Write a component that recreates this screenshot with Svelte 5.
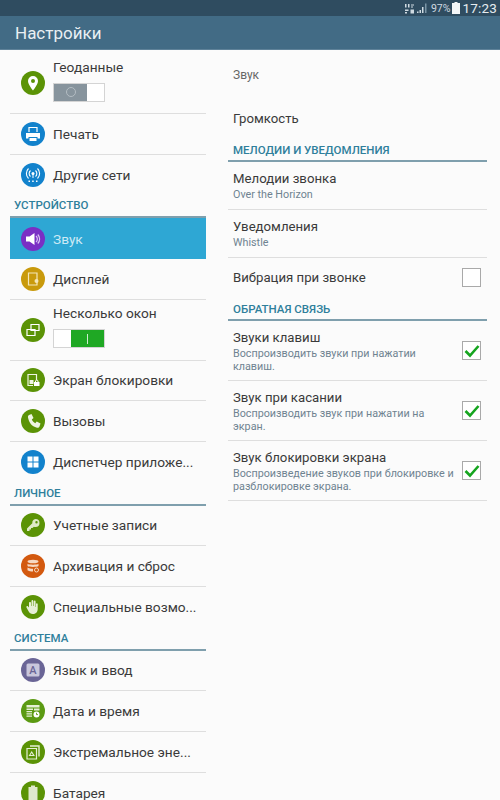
<script lang="ts">
  const GREEN = '#5b9306';
  const BLUE = '#1282cc';

  const left = [
    { label: 'Геоданные', icon: 'pin', color: GREEN, toggle: 'off' },
    { label: 'Печать', icon: 'print', color: BLUE },
    { label: 'Другие сети', icon: 'net', color: BLUE, last: true },
    { header: 'Устройство' },
    { label: 'Звук', icon: 'sound', color: '#7a2fc4', active: true },
    { label: 'Дисплей', icon: 'display', color: '#c99a0c' },
    { label: 'Несколько окон', icon: 'windows', color: GREEN, toggle: 'on' },
    { label: 'Экран блокировки', icon: 'lock', color: GREEN },
    { label: 'Вызовы', icon: 'phone', color: GREEN },
    { label: 'Диспетчер приложе...', icon: 'apps', color: BLUE, last: true },
    { header: 'Личное' },
    { label: 'Учетные записи', icon: 'key', color: GREEN },
    { label: 'Архивация и сброс', icon: 'backup', color: '#d3590f' },
    { label: 'Специальные возмо...', icon: 'hand', color: GREEN, last: true },
    { header: 'Система' },
    { label: 'Язык и ввод', icon: 'lang', color: '#6a6596' },
    { label: 'Дата и время', icon: 'date', color: '#5b9a12' },
    { label: 'Экстремальное эне...', icon: 'eco', color: GREEN },
    { label: 'Батарея', icon: 'battery', color: GREEN, last: true }
  ];

  const feedback = [
    { title: 'Звуки клавиш', sub: 'Воспроизводить звуки при нажатии клавиш.' },
    { title: 'Звук при касании', sub: 'Воспроизводить звук при нажатии на экран.' },
    { title: 'Звук блокировки экрана', sub: 'Воспроизведение звуков при блокировке и разблокировке экрана.' }
  ];
</script>

{#snippet glyph(name)}
  <svg viewBox="0 0 24 24" width="24" height="24">
    {#if name === 'pin'}
      <path fill="#fff" fill-rule="evenodd" d="M12 5a5 5 0 0 0-5 5c0 3.500 5 9.500 5 9.500s5-6 5-9.500a5 5 0 0 0-5-5zm0 3a2 2 0 1 1 0 4 2 2 0 0 1 0-4z" />
    {:else if name === 'print'}
      <path fill="none" stroke="#fff" stroke-width="1.200" d="M8 10V5.500h8V10" />
      <path fill="#fff" d="M5 11h14v5.500h-2.500V15h-9v1.500H5zM8.500 16h7v3h-7z" />
    {:else if name === 'net'}
      <g fill="none" stroke="#fff" stroke-width="1.100">
        <path d="M9.500 7.500a4 4 0 0 0 0 6M14.500 7.500a4 4 0 0 1 0 6M7.500 5.500a7 7 0 0 0 0 10M16.500 5.500a7 7 0 0 1 0 10" />
      </g>
      <circle cx="12" cy="10.500" r="1.500" fill="#fff" />
      <path fill="#fff" d="M11.500 11h1v4h-1zM7.500 17.500h1.500v1.500H7.500zM11.200 17.500h1.500v1.500h-1.500zM15 17.500h1.500v1.500H15z" />
    {:else if name === 'sound'}
      <path fill="#fff" d="M5 9.500h3.500L13.500 6v12l-5-3.500H5z" />
      <path fill="none" stroke="#d9c4f2" stroke-width="1.200" d="M15 9a4 4 0 0 1 0 6M16.800 7.500a6.500 6.500 0 0 1 0 9" />
    {:else if name === 'display'}
      <path fill="none" stroke="#f4e6b8" stroke-width="1.200" d="M7.500 6h8.500v12H7.500z" />
      <circle cx="15.500" cy="14" r="2" fill="#f4e6b8" />
    {:else if name === 'windows'}
      <path fill="none" stroke="#fff" stroke-width="1.200" d="M10 6.500h8v6h-8zM6 11.500h8v6H6z" />
    {:else if name === 'lock'}
      <path fill="none" stroke="#eef5e2" stroke-width="1.200" d="M7 12V6.500h8.500V12M7 12v5.500h5" />
      <path fill="#eef5e2" d="M8.500 12h4v4h-4z" />
      <path fill="#fff" d="M13 14h5.500v4H13z" />
      <path fill="none" stroke="#fff" d="M14.500 14v-1a1.300 1.300 0 0 1 2.500 0v1" />
    {:else if name === 'phone'}
      <path fill="#eef5e2" d="M8 6l2.500-1 2 4-1.700 1.500c.8 1.800 2 3 3.500 3.800l1.400-1.800 3.800 2-1 3c-.4 1-1.500 1.500-2.500 1.200C10.500 17.500 8 13.500 7 8.500 6.800 7.500 7.200 6.400 8 6z" />
    {:else if name === 'apps'}
      <path fill="#fff" d="M6.500 6.500h5v5h-5zM12.500 6.500h5v5h-5zM6.500 12.500h5v5h-5zM12.500 12.500h5v5h-5z" />
    {:else if name === 'key'}
      <path fill="#dfeac8" fill-rule="evenodd" d="M14.500 6a4 4 0 0 1 0 8c-.6 0-1.100-.1-1.600-.3l-1.400 1.300H10v1.500H8.500V18H6v-2.500l5.300-5.300A4 4 0 0 1 14.500 6zm1 2a1.200 1.200 0 1 0 0 2.400 1.200 1.200 0 0 0 0-2.400z" />
    {:else if name === 'backup'}
      <ellipse cx="12" cy="7.500" rx="5.500" ry="1.800" fill="#f6d9c4" />
      <path fill="#f6d9c4" d="M6.500 9.800c1 1.200 10 1.200 11 0V12c-1 1.200-10 1.200-11 0zM6.500 13.500c1 1 4 1.300 5.500 1.300v2.700c-2 0-4.500-.4-5.500-1.300z" />
      <circle cx="15.500" cy="16" r="2" fill="none" stroke="#f6d9c4" stroke-width="1" />
    {:else if name === 'hand'}
      <path fill="#e6efd6" d="M9 7c.7 0 1 .5 1 1v3h.5V6c0-1.200 1.800-1.200 1.800 0v5h.5V6.500c0-1.200 1.800-1.200 1.800 0V12h.4V9c0-1.100 1.700-1.100 1.700 0v5c0 3-2 5-5 5-2 0-3.200-1-4-2.500L5.500 12.500c-.6-1 .8-2 1.600-1.100L8 12.500V8c0-.5.400-1 1-1z" />
    {:else if name === 'lang'}
      <rect x="5.500" y="5.500" width="13" height="13" rx="1.500" fill="#c9c7dc" />
      <text x="12" y="16.300" text-anchor="middle" class="lang-a">A</text>
    {:else if name === 'date'}
      <path fill="#e6efd6" d="M5.500 6h13v2.500h-13zM5.500 9.500H12V11H5.500zM5.500 12H11v1.300H5.500zM5.500 14.300H11v1.300H5.500zM5.500 16.600H11v1.200H5.500zM13 9.500h5.500v2H13z" />
      <circle cx="15.500" cy="15.500" r="3" fill="#fff" />
      <path fill="none" stroke="#5b9a12" stroke-width="0.900" d="M15.500 13.800v1.800h1.500" />
    {:else if name === 'eco'}
      <path fill="none" stroke="#e6efd6" stroke-width="1.200" d="M6 8.500h9.500V19H6z" />
      <path fill="none" stroke="#e6efd6" stroke-width="1.400" d="M9 6h9v10.500" />
      <path fill="none" stroke="#e6efd6" stroke-width="1.100" d="M8.500 15.500l2.200-3.500 2.200 3.500z" />
    {:else if name === 'battery'}
      <path fill="#dfe8cc" d="M10 4.500h4V6h2.500v14h-9V6H10z" />
    {/if}
  </svg>
{/snippet}

<div class="screen">
  <div class="statusbar">
    <svg class="st-net" viewBox="0 0 9 11" width="9" height="11">
      <path fill="#cfdae1" d="M0 1h1.500v3.500H0zM3 1h1.500v3.500H3zM6 1.500h3v1H6zM6 3.500h2v1H6zM0 6.500h3.500V8H0zM0 9h2v1.500H0zM5.500 6.500H9v4H5.500z" />
    </svg>
    <svg class="st-signal" viewBox="0 0 10 12" width="10" height="12">
      <path fill="#cfdae1" d="M0 9.500h1.500V11H0zM2.500 8H4v3H2.500zM5 5h1.500v6H5z" />
      <path fill="#7b95a6" d="M8 1.500h1.500V11H8z" />
    </svg>
    <span class="st-pct">97%</span>
    <svg class="st-batt" viewBox="0 0 8 12" width="8" height="12">
      <path fill="#f3f6f8" d="M2.500 0h3v1H8v11H0V1h2.500z" />
    </svg>
    <span class="st-time">17:23</span>
  </div>
  <div class="actionbar">Настройки</div>

  <div class="panes">
    <nav class="left">
      {#each left as row}
        {#if row.header}
          <div class="group">{row.header}</div>
        {:else}
          <div class="item" class:active={row.active} class:last={row.last} class:tall={row.toggle}>
            <span class="badge" style="background:{row.color}">{@render glyph(row.icon)}</span>
            <div class="item-body">
              <span class="item-label">{row.label}</span>
              {#if row.toggle === 'off'}
                <span class="toggle">
                  <span class="knob off"><i class="ring"></i></span>
                  <span class="blank"></span>
                </span>
              {:else if row.toggle === 'on'}
                <span class="toggle">
                  <span class="blank"></span>
                  <span class="knob on"><i class="bar"></i></span>
                </span>
              {/if}
            </div>
          </div>
        {/if}
      {/each}
    </nav>

    <main class="right">
      <div class="crumb">Звук</div>
      <div class="volume">Громкость</div>

      <div class="group wide">Мелодии и уведомления</div>
      <div class="pref">
        <div class="pref-title">Мелодии звонка</div>
        <div class="pref-value">Over the Horizon</div>
      </div>
      <div class="pref">
        <div class="pref-title">Уведомления</div>
        <div class="pref-value">Whistle</div>
      </div>
      <div class="pref check-row plain">
        <div class="pref-title">Вибрация при звонке</div>
        <span class="checkbox"></span>
      </div>

      <div class="group wide">Обратная связь</div>
      {#each feedback as f}
        <div class="pref check-row feedback">
          <div class="pref-text">
            <div class="pref-title">{f.title}</div>
            <div class="pref-sub">{f.sub}</div>
          </div>
          <span class="checkbox">
            <svg viewBox="0 0 18 18" width="18" height="18">
              <path fill="none" stroke="#16a51f" stroke-width="2.600" d="M2.500 9l4.500 4.500 8.500-9.500" />
            </svg>
          </span>
        </div>
      {/each}
    </main>
  </div>
</div>

<style>
  :global(body) {
    margin: 0;
    background: #fbfbfb;
  }

  .screen {
    width: 500px;
    height: 800px;
    overflow: hidden;
    display: flex;
    flex-direction: column;
    font-family: Roboto, "Liberation Sans", sans-serif;
    color: #333;
  }

  .statusbar {
    height: 16px;
    flex: none;
    background: #2f4c60;
    display: flex;
    align-items: center;
    justify-content: flex-end;
    color: #e6ecf0;
    padding-right: 3px;
  }

  .st-net {
    margin-right: 3px;
  }

  .st-pct {
    font-size: 10.500px;
    margin: 0 2px 0 4px;
    color: #cfdae1;
  }

  .st-batt {
    margin-right: 2px;
  }

  .st-time {
    font-size: 13.500px;
    letter-spacing: 0.2px;
  }

  .actionbar {
    height: 34px;
    flex: none;
    box-sizing: border-box;
    background: #426b85;
    color: #e9eff3;
    font-size: 17px;
    line-height: 34px;
    padding-left: 15px;
    border-bottom: 1px solid #5f8299;
  }

  .panes {
    flex: 1;
    display: flex;
    min-height: 0;
  }

  .left {
    width: 206px;
    flex: none;
    box-sizing: border-box;
    padding-left: 10px;
    padding-top: 3px;
  }

  .right {
    flex: 1;
    box-sizing: border-box;
    padding: 0 13px 0 22px;
  }

  .group {
    height: 23px;
    box-sizing: border-box;
    border-bottom: 2px solid #7f9fad;
    color: #2f7f9b;
    font-size: 11.500px;
    font-weight: 500;
    text-transform: uppercase;
    line-height: 21px;
    padding-left: 4px;
  }

  .item {
    height: 40.670px;
    box-sizing: border-box;
    display: flex;
    align-items: center;
    padding-left: 11px;
    border-bottom: 1px solid #dedede;
  }

  .item.last {
    border-bottom: none;
  }

  .item.tall {
    height: 61px;
  }

  .item.active {
    background: #2ea7d4;
    border-bottom: none;
  }

  .item.active .item-label {
    color: #cdeaf5;
  }

  .badge {
    width: 24px;
    height: 24px;
    flex: none;
    border-radius: 50%;
    display: flex;
  }

  .item-body {
    margin-left: 8px;
    display: flex;
    flex-direction: column;
    gap: 8px;
  }

  .item.tall .item-body {
    padding-bottom: 6px;
  }

  .item-label {
    font-size: 13.700px;
    line-height: 16px;
    color: #3a3a3a;
    white-space: nowrap;
  }

  .toggle {
    width: 52px;
    height: 19px;
    box-sizing: border-box;
    border: 1px solid #d4d4d4;
    display: flex;
    background: #fff;
  }

  .blank {
    flex: 1;
  }

  .knob {
    width: 33px;
    display: flex;
    align-items: center;
    justify-content: center;
  }

  .knob.off {
    background: #87949d;
  }

  .knob.on {
    background: #1fa824;
  }

  .ring {
    width: 8px;
    height: 8px;
    border: 1px solid #b4bdc3;
    border-radius: 50%;
  }

  .bar {
    width: 1px;
    height: 10px;
    background: #cfeccf;
  }

  .crumb {
    height: 50px;
    font-size: 12px;
    line-height: 50px;
    color: #666;
    padding-left: 5px;
  }

  .volume {
    height: 38px;
    font-size: 13.200px;
    line-height: 38px;
    color: #3a3a3a;
    padding-left: 5px;
  }

  .group.wide {
    height: 24px;
    padding-left: 5px;
    line-height: 24px;
  }

  .pref {
    box-sizing: border-box;
    height: 48px;
    padding: 8px 0 0 5px;
    border-bottom: 1px solid #dedede;
  }

  .pref-title {
    font-size: 13.200px;
    line-height: 17px;
    color: #3a3a3a;
  }

  .pref-value {
    font-size: 10.750px;
    line-height: 14px;
    color: #6f8391;
    margin-top: 1px;
  }

  .pref-sub {
    font-size: 10.750px;
    line-height: 13px;
    color: #6f8391;
    margin-top: 1px;
  }

  .check-row {
    display: flex;
    align-items: center;
    justify-content: space-between;
    padding: 0 6px 0 5px;
  }

  .plain {
    height: 39px;
    border-bottom: none;
  }

  .feedback {
    height: 60px;
  }

  .pref-text {
    width: 224px;
  }

  .checkbox {
    width: 19px;
    height: 19px;
    flex: none;
    box-sizing: border-box;
    border: 1px solid #a9a9a9;
    background: #fff;
    display: flex;
    align-items: center;
    justify-content: center;
  }

  .checkbox svg {
    flex: none;
  }

  .lang-a {
    font-family: Roboto, sans-serif;
    font-size: 11px;
    font-weight: 500;
    fill: #6a6596;
  }
</style>
